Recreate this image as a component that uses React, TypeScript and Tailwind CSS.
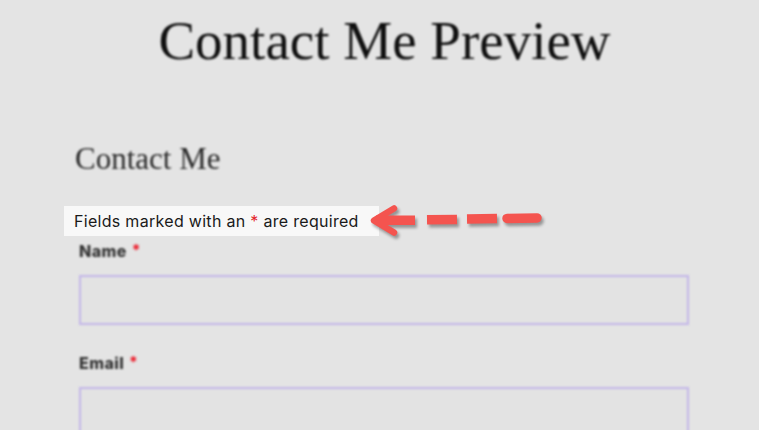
import React from "react";

function Arrow() {
  return (
    <svg
      className="absolute left-[360px] top-[198px] drop-shadow-[2px_3px_1.5px_rgba(0,0,0,0.35)]"
      width="190"
      height="46"
      viewBox="360 198 190 46"
      fill="none"
    >
      <polyline
        points="394,208.5 374,220.5 394,232.5"
        stroke="#f4544f"
        strokeWidth="6.5"
        strokeLinecap="round"
        strokeLinejoin="round"
      />
      <line x1="376" y1="220.3" x2="415" y2="220.2" stroke="#f4544f" strokeWidth="9.5" />
      <line x1="427" y1="219.8" x2="457" y2="219.4" stroke="#f4544f" strokeWidth="9.5" />
      <line x1="467" y1="219" x2="497" y2="218.6" stroke="#f4544f" strokeWidth="9.5" />
      <line x1="507" y1="218.4" x2="537" y2="217.9" stroke="#f4544f" strokeWidth="9.5" strokeLinecap="round" />
    </svg>
  );
}

function Field({ label }: { label: string }) {
  return (
    <div className="flex flex-col">
      <div className="pl-[15px] h-[24px] flex items-start blur-[1px]">
        <span
          className="text-[16px] leading-[24px] font-extrabold tracking-[0.4px] text-[#333333]"
          style={{ fontFamily: "Inter, 'Liberation Sans', sans-serif" }}
        >
          {label}
        </span>
        <span
          className="text-[15px] leading-[22px] font-extrabold text-[#ec1c2a] ml-[5px]"
          style={{ fontFamily: "Inter, sans-serif" }}
        >
          *
        </span>
      </div>
      <div className="ml-[15px] mt-[12px] w-[610px] h-[50px] border-2 border-[#c3b6e8] bg-[#e3e3e3] blur-[0.8px]" />
    </div>
  );
}

export default function App() {
  return (
    <div className="relative w-[759px] h-[430px] overflow-hidden bg-[#e4e4e4]">
      <div className="pt-[8px] pl-[10px] text-center">
        <h1
          className="text-[55px] leading-[66px] text-[#0f0f0f] blur-[0.9px]"
          style={{ fontFamily: "'Liberation Serif', serif" }}
        >
          Contact Me Preview
        </h1>
      </div>
      <div className="ml-[64px] w-[625px] flex flex-col">
        <h2
          className="mt-[66px] pl-[11px] text-[31px] leading-[37px] text-[#2a2a2a] blur-[0.9px]"
          style={{ fontFamily: "'Liberation Serif', serif" }}
        >
          Contact Me
        </h2>
        <div
          className="mt-[29px] w-[315px] h-[30px] bg-[#f8f8f8] pl-[10px] pt-[3px] text-[16px] leading-[24px] tracking-[0.3px] text-[#1a1a1a]"
          style={{ fontFamily: "Inter, 'Liberation Sans', sans-serif" }}
        >
          Fields marked with an <span className="text-[#e4252d]">*</span> are required
        </div>
        <div className="mt-[3px]">
          <Field label="Name" />
        </div>
        <div className="mt-[26px]">
          <Field label="Email" />
        </div>
      </div>
      <Arrow />
    </div>
  );
}
